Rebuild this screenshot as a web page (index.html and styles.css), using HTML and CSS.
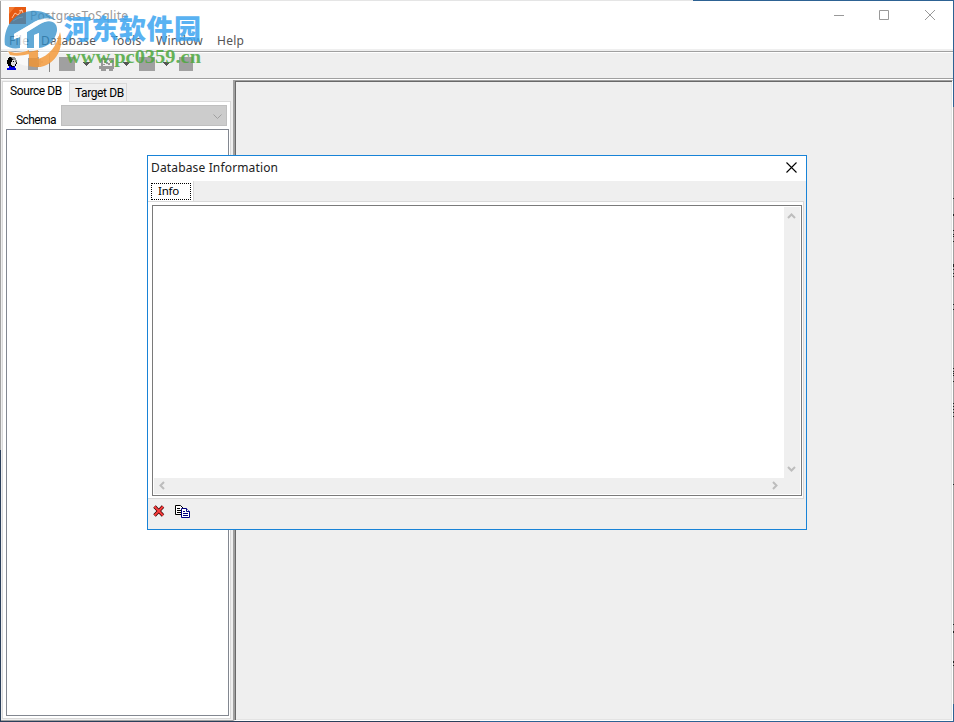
FILE: index.html
```html
<!DOCTYPE html>
<html lang="en">
<head>
    <meta charset="UTF-8">
    <title>PostgresToSqlite</title>
    <link rel="stylesheet" href="styles.css">
</head>
<body>
    <div class="window">
        <header class="titlebar">
            <svg class="app-icon" width="17" height="17" viewBox="0 0 17 17">
                <rect width="17" height="17" fill="#e65a12"/>
                <path d="M0 0h6L0 7z" fill="#f47c34"/>
                <path d="M3 11l3-5 3 2 4-5M4 14l5-3 5-1M10 4l3-1 1 3" fill="none" stroke="#ffd8bd" stroke-width=".8"/>
            </svg>
            <span class="title">PostgresToSqlite</span>
            <svg class="controls" width="103" height="12" viewBox="0 0 103 12" fill="none" stroke="#999">
                <path d="M1 5.500h10M46.500.5h9v9h-9zM92 0l10 10M102 0L92 10"/>
            </svg>
        </header>
        <nav class="menu">
            <span class="m-file">File</span>
            <span class="m-database">Database</span>
            <span class="m-tools">Tools</span>
            <span class="m-window">Window</span>
            <span class="m-help">Help</span>
        </nav>
        <div class="toolbar">
            <svg width="220" height="25" viewBox="0 0 220 25">
                <g shape-rendering="crispEdges">
                    <path d="M9 4h6v1h1v2h1v4h-1v2h-1v1h-5v-1H8v-2H7V7h1V5h1z" fill="#000"/>
                    <path d="M12 7h3v2h1v2h-1v2h-3v-1h-1V9h1z" fill="#ddd"/>
                    <path d="M13 8h1v1h-1z" fill="#000"/>
                    <path d="M9 13h2v1h3v-1h1v2h1v2H7v-2h2z" fill="#0000e0"/>
                    <path d="M28 5h9v3h2v6h-1v3H28z" fill="#a0a0a0"/>
                    <path d="M37 4h2v2h2v2h2v2h-2v2h-2v-2h-2z" fill="#aaa"/>
                    <path d="M49 1h1v18h-1z" fill="#888"/>
                    <path d="M59 4h16v14H59zM139 4h16v14h-16zM179 4h14v14h-14z" fill="#a0a0a0"/>
                    <path d="M101 5h13v11h-1v2h-4v-2h-3v2h-5v-2h-2v-3h2z" fill="#999"/>
                    <path d="M103 7h9v6h-9z" fill="#eee"/>
                    <path d="M104 8h2v1h2v1h2v2h-2v-1h-2v-1h-2zM109 7h1v1h-1zM103 11h2v1h-2zM110 9h1v1h-1z" fill="#999"/>
                    <path d="M83 9h7v1h-1v1h-1v1h-1v1h-1v-1h-1v-1h-1v-1h-1zM123 9h7v1h-1v1h-1v1h-1v1h-1v-1h-1v-1h-1v-1h-1zM163 9h7v1h-1v1h-1v1h-1v1h-1v-1h-1v-1h-1v-1h-1z" fill="#555"/>
                </g>
            </svg>
        </div>
        <main class="workspace">
            <aside class="sidebar">
                <div class="tabs">
                    <div class="tab tab-active">Source DB</div>
                    <div class="tab">Target DB</div>
                </div>
                <div class="sheet">
                    <div class="schema-row">
                        <label>Schema</label>
                        <div class="combo">
                            <svg width="9" height="6" viewBox="0 0 9 6" fill="none" stroke="#a0a0a0"><path d="M.5.500l4 4 4-4"/></svg>
                        </div>
                    </div>
                    <div class="tree"></div>
                </div>
            </aside>
            <div class="mdi"></div>
        </main>
    </div>

    <section class="dialog">
        <div class="dialog-title">
            <span>Database Information</span>
            <svg width="11" height="11" viewBox="0 0 11 11" stroke="#000" stroke-width="1.100"><path d="M.5.500l10 10M10.500.5l-10 10"/></svg>
        </div>
        <div class="dialog-tabs"><div class="info-tab"><span>Info</span></div></div>
        <div class="dialog-sheet">
            <div class="memo">
                <div class="memo-text"></div>
                <div class="scroll-v">
                    <svg width="9" height="6" viewBox="0 0 9 6"><path d="M1 5l3.500-3.500L8 5"/></svg>
                    <svg width="9" height="6" viewBox="0 0 9 6"><path d="M1 1l3.500 3.500L8 1"/></svg>
                </div>
                <div class="scroll-h">
                    <svg width="6" height="9" viewBox="0 0 6 9"><path d="M5 1L1.500 4.500 5 8"/></svg>
                    <svg width="6" height="9" viewBox="0 0 6 9"><path d="M1 1l3.500 3.500L1 8"/></svg>
                </div>
            </div>
        </div>
        <div class="dialog-buttons">
            <svg width="12" height="12" viewBox="0 0 12 12">
                <path d="M1.500 1.500l8.500 9M10 1.500l-8.500 9" stroke="#300" stroke-width="3.400"/>
                <path d="M1.500 1.500l8.500 9M10 1.500l-8.500 9" stroke="#f83c3c" stroke-width="2"/>
            </svg>
            <svg class="copy" width="15" height="13" viewBox="0 0 15 13" fill="#fff">
                <path d="M.5.500h5l3 3v6h-8z" stroke="#000"/>
                <path d="M2 3.500h3M2 5.500h4M2 7.500h4" stroke="#000"/>
                <path d="M6.500 3.500h5l3 3v6h-8z" stroke="#000080"/>
                <path d="M11.500 3.500v3h3M8 6.500h2M8 8.500h5M8 10.500h5" stroke="#000080"/>
            </svg>
        </div>
    </section>

    <!-- site watermark -->
    <svg class="watermark" width="210" height="72" viewBox="0 0 210 72">
        <path d="M7 50C12 53 20 52 28 50V66C18 65 11 60 7 50zM39 50C48 49 56 43 61 33C63 45 58 58 47 64L39 66z" fill="#fff" opacity=".6"/>
        <path d="M8 51C15 54 22 53 29 50V54C22 56 15 56 10 55zM29 52L38 50V59C49 56 57 46 60 32C64 46 58 61 44 66C38 68 33 67 29 66z" fill="#f3942f" opacity=".8"/>
        <path d="M5 45C3 29 12 13 31 11C43 10 51 15 55 20C46 17 38 19 31 24L14 34V39L20 37V48C14 49 9 48 5 45z" fill="#2e8cc8" opacity=".75"/>
        <path d="M27 32L40 24C50 18 58 22 57 31C55 41 48 47 39 48V33L34 35V48H27z" fill="#2e8cc8" opacity=".75"/>
        <path d="M14 34L31 24C38 19 46 17 54 20C48 20 44 22 40 24L27 32V48H20V37L14 39z" fill="#fff" opacity=".75"/>
        <path d="M34 35L39 33V49L34 50z" fill="#fff" opacity=".7"/>
        <text class="wm-name" x="64" y="39" textLength="137">河东软件园</text>
        <text class="wm-url" x="66" y="63" textLength="135" lengthAdjust="spacingAndGlyphs">www.pc0359.cn</text>
    </svg>

    <!-- what is behind the window shows along its edges -->
    <svg class="edges" width="954" height="722" viewBox="0 0 954 722" shape-rendering="crispEdges">
        <path d="M0 0h693v1H0z" fill="#e5e5e5"/>
        <path d="M693 0h261v1H693zM953 0h1v107h-1zM953 704h1v18h-1zM480 721h474v1H480z" fill="#2d6293"/>
        <path d="M0 1h1v449H0zM953 107h1v597h-1z" fill="#a0a0a0"/>
        <path d="M0 450h1v272H0zM0 721h480v1H0z" fill="#2b405b"/>
        <path d="M953.500 198v1M953.500 214v2M953.500 230v1M953.500 234v1M953.500 236v1M953.500 241v1M953.500 264v3M953.500 269v1M953.500 273v1M953.500 276v1M953.500 304v1M953.500 309v1M953.500 368v1M953.500 371v1M953.500 373v1M953.500 375v1M953.500 381v1M953.500 403v1M953.500 406v1M953.500 409v1M953.500 412v1M953.500 416v1M953.500 484v1M953.500 624v1M953.500 631v2M953.500 661v2M953.500 665v1" stroke="#222"/>
    </svg>
</body>
</html>
```
FILE: styles.css
```css
* {
    box-sizing: border-box;
}
body {
    margin: 0;
    overflow: hidden;
    font-family: "Noto Sans", sans-serif;
    font-size: 12px;
}
svg {
    display: block;
    flex: none;
}
.window {
    width: 954px;
    height: 722px;
    padding: 1px;
    display: flex;
    flex-direction: column;
    background: #efefef;
}
.titlebar {
    height: 29px;
    display: flex;
    align-items: flex-start;
    background: #fff;
    padding: 6px 17px 0 8px;
}
.title {
    margin-left: 4px;
    line-height: 18px;
    color: #999;
    letter-spacing: 0.3px;
}
.controls {
    margin: 3px 0 0 auto;
}
.menu {
    height: 19px;
    display: flex;
    padding-left: 8px;
    background: #fff;
    color: #555;
    line-height: 21px;
    letter-spacing: 0.25px;
}
.m-file { width: 32px; }
.m-database { width: 70px; }
.m-tools { width: 45px; }
.m-window { width: 61px; }
.toolbar {
    height: 29px;
    margin: 2px 0 0 -1px;
    border-top: 1px solid #a0a0a0;
    border-bottom: 1px solid #fff;
    box-shadow: inset 0 1px #fff, inset 0 -1px #a0a0a0;
}
.toolbar svg {
    margin-top: 1px;
}
.workspace {
    flex: 1;
    display: flex;
    min-height: 0;
}
.sidebar {
    width: 232px;
    padding: 1px 2px 1px 1px;
    display: flex;
    flex-direction: column;
    font-family: Roboto, sans-serif;
    letter-spacing: -0.6px;
    border-bottom: 1px solid #a0a0a0;
}
.tabs {
    display: flex;
    align-items: flex-end;
    height: 20px;
}
.tab {
    height: 18px;
    width: 57px;
    border: 1px solid #d9d9d9;
    border-left: 0;
    border-bottom: 0;
    padding-left: 5px;
    line-height: 19px;
    white-space: nowrap;
    letter-spacing: -0.4px;
}
.tab-active {
    width: 68px;
    height: 21px;
    border-left: 1px solid #d9d9d9;
    background: #fff;
    padding-left: 7px;
    z-index: 1;
    margin-bottom: -1px;
}
.sheet {
    flex: 1;
    display: flex;
    flex-direction: column;
    border: 1px solid #d9d9d9;
    background: #fff;
    padding: 3px 1px 2px 3px;
}
.schema-row {
    display: flex;
    height: 24px;
    padding-left: 10px;
    line-height: 30px;
}
.schema-row label {
    width: 45px;
}
.combo {
    width: 166px;
    height: 21px;
    background: #ccc;
    border: 1px solid #bfbfbf;
    display: flex;
    justify-content: flex-end;
    padding: 8px 4px 0 0;
}
.tree {
    flex: 1;
    border: 1px solid #828790;
}
.mdi {
    flex: 1;
    border: 1px solid;
    border-color: #a0a0a0 #fff #fff #a0a0a0;
    border-left-width: 2px;
    box-shadow: inset 1px 1px #696969, inset -1px -1px #e3e3e3;
}
.dialog {
    position: absolute;
    left: 147px;
    top: 155px;
    width: 660px;
    height: 375px;
    border: 1px solid #1883d7;
    background: #efefef;
    display: flex;
    flex-direction: column;
}
.dialog-title {
    height: 25px;
    background: #fff;
    display: flex;
    justify-content: space-between;
    padding: 0 9px 0 3px;
    line-height: 24px;
    color: #222;
    letter-spacing: 0.15px;
}
.dialog-title svg {
    margin-top: 6px;
}
.dialog-tabs {
    height: 20px;
}
.info-tab {
    width: 46px;
    height: 20px;
    padding: 2px 0 0 3px;
    background: #fff;
    border-right: 1px solid #d9d9d9;
}
.info-tab span {
    display: block;
    width: 40px;
    height: 17px;
    border: 1px dotted #000;
    padding-left: 6px;
    line-height: 14px;
    font-size: 11.5px;
    letter-spacing: -0.2px;
}
.dialog-sheet {
    width: 656px;
    height: 298px;
    border: 1px solid #d9d9d9;
    border-left: 0;
    background: #fff;
    padding: 3px 1px 2px 4px;
}
.memo {
    width: 650px;
    height: 291px;
    border: 1px solid #7a7a7a;
    padding: 1px;
    display: grid;
    grid-template-columns: 630px 16px;
    grid-template-rows: 271px 16px;
}
.scroll-v, .scroll-h {
    display: flex;
    justify-content: space-between;
    background: #efefef;
    fill: none;
    stroke: #bdbdbd;
    stroke-width: 2;
}
.scroll-v {
    flex-direction: column;
    padding: 6px 0 6px 3px;
}
.scroll-h {
    grid-column: 1 / 3;
    align-items: center;
    padding: 0 22px 2px 5px;
}
.dialog-buttons {
    display: flex;
    padding: 6px 0 0 5px;
}
.copy {
    margin-left: 10px;
}
.watermark, .edges {
    position: absolute;
    left: 0;
    top: 0;
    pointer-events: none;
}
.wm-name {
    font: 900 27px "Noto Sans CJK SC", sans-serif;
    fill: #3da5f0;
    opacity: 0.85;
}
.wm-url {
    font: bold 19px "Liberation Serif", serif;
    fill: #4da83e;
    opacity: 0.85;
}
```
